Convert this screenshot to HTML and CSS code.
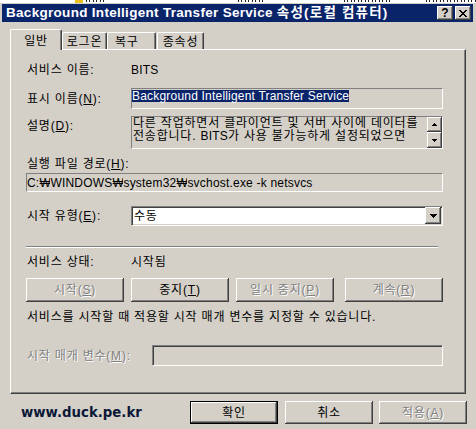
FILE: index.html
```html
<!DOCTYPE html>
<html lang="ko">
<head>
<meta charset="utf-8">
<title>BITS 속성</title>
<link rel="stylesheet" href="styles.css">
</head>
<body>
<div class="screen">
  <div class="behind">
    <span class="frag-icon"></span>
    <span class="frag f1"></span>
    <span class="frag f2"></span>
    <span class="frag f3"></span>
    <span class="frag f4"></span>
  </div>
  <div class="window">
    <div class="titlebar">
      <span class="title">Background Intelligent Transfer Service <span class="title-ko">속성(로컬 컴퓨터)</span></span>
      <div class="caps">
        <div class="cap help">?</div>
        <div class="cap close">
          <svg width="8" height="7" viewBox="0 0 8 7" shape-rendering="crispEdges">
            <rect x="0" y="0" width="2" height="1"/><rect x="6" y="0" width="2" height="1"/>
            <rect x="1" y="1" width="2" height="1"/><rect x="5" y="1" width="2" height="1"/>
            <rect x="2" y="2" width="4" height="1"/>
            <rect x="3" y="3" width="2" height="1"/>
            <rect x="2" y="4" width="4" height="1"/>
            <rect x="1" y="5" width="2" height="1"/><rect x="5" y="5" width="2" height="1"/>
            <rect x="0" y="6" width="2" height="1"/><rect x="6" y="6" width="2" height="1"/>
          </svg>
        </div>
      </div>
    </div>
    <div class="client">
      <div class="tabs">
        <div class="tab active">일반</div>
        <div class="tab t2">로그온</div>
        <div class="tab t3">복구</div>
        <div class="tab t4">종속성</div>
      </div>
      <div class="panel">
        <div class="row r-name">
          <span class="label">서비스 이름:</span>
          <span class="value latin">BITS</span>
        </div>
        <div class="row r-display">
          <span class="label">표시 이름(<u>N</u>):</span>
          <div class="field flat display"><span class="sel">Background Intelligent Transfer Service</span></div>
        </div>
        <div class="row r-desc">
          <span class="label">설명(<u>D</u>):</span>
          <div class="field flat desc">
            <div class="desc-text">다른 작업하면서 클라이언트 및 서버 사이에 데이터를<br>전송합니다. <span class="latin">BITS</span>가 사용 불가능하게 설정되었으면</div>
            <div class="vscroll">
              <div class="btn sbtn">
                <svg width="5" height="3" viewBox="0 0 5 3" shape-rendering="crispEdges"><rect x="2" y="0" width="1" height="1"/><rect x="1" y="1" width="3" height="1"/><rect x="0" y="2" width="5" height="1"/></svg>
              </div>
              <div class="btn sbtn down">
                <svg width="5" height="3" viewBox="0 0 5 3" shape-rendering="crispEdges"><rect x="0" y="0" width="5" height="1"/><rect x="1" y="1" width="3" height="1"/><rect x="2" y="2" width="1" height="1"/></svg>
              </div>
            </div>
          </div>
        </div>
        <div class="row r-pathlabel">
          <span class="label wide">실행 파일 경로(<u>H</u>):</span>
        </div>
        <div class="row r-path">
          <div class="field flat path">C:<span class="won">₩</span>WINDOWS<span class="won">₩</span>system32<span class="won">₩</span>svchost.exe -k netsvcs</div>
        </div>
        <div class="row r-start">
          <span class="label">시작 유형(<u>E</u>):</span>
          <div class="field sunken select">
            <span class="select-text">수동</span>
            <div class="btn ddbtn">
              <svg width="7" height="4" viewBox="0 0 7 4" shape-rendering="crispEdges"><rect x="0" y="0" width="7" height="1"/><rect x="1" y="1" width="5" height="1"/><rect x="2" y="2" width="3" height="1"/><rect x="3" y="3" width="1" height="1"/></svg>
            </div>
          </div>
        </div>
        <div class="sep"></div>
        <div class="row r-status">
          <span class="label">서비스 상태:</span>
          <span class="value">시작됨</span>
        </div>
        <div class="row r-buttons">
          <div class="btn act disabled">시작(<u>S</u>)</div>
          <div class="btn act">중지(<u>T</u>)</div>
          <div class="btn act disabled">일시 중지(<u>P</u>)</div>
          <div class="btn act disabled last">계속(<u>R</u>)</div>
        </div>
        <div class="row r-help">서비스를 시작할 때 적용할 시작 매개 변수를 지정할 수 있습니다.</div>
        <div class="row r-param">
          <span class="label param-label disabled">시작 매개 변수(<u>M</u>):</span>
          <div class="field sunken param"></div>
        </div>
      </div>
      <div class="footer">
        <span class="watermark">www.duck.pe.kr</span>
        <div class="dlg-btns">
          <div class="btn dlg default">확인</div>
          <div class="btn dlg cancel">취소</div>
          <div class="btn dlg disabled">적용(<u>A</u>)</div>
        </div>
      </div>
    </div>
  </div>
</div>
</body>
</html>
```
FILE: styles.css
```css
* { box-sizing: border-box; margin: 0; padding: 0; }
html, body { width: 476px; height: 429px; overflow: hidden; }
body {
  background: #fff;
  font-family: "Liberation Sans", "Noto Sans CJK KR", sans-serif;
  font-size: 12px;
  line-height: 14px;
  letter-spacing: 0.8px;
  color: #000;
}
u { text-decoration: underline; text-underline-offset: 1px; }
.latin { letter-spacing: 0.2px; }

.screen { width: 476px; height: 429px; display: flex; flex-direction: column; }

/* bottoms of glyphs from the window behind */
.behind { height: 3px; flex: none; display: flex; align-items: flex-start; overflow: hidden; background: #fff; }
.frag {
  height: 2px;
  flex: none;
  background: repeating-linear-gradient(90deg, #222 0 1px, transparent 1px 3px, #222 3px 4px, transparent 4px 7px);
}
.frag-icon { width: 8px; height: 3px; background: #e8c020; margin-left: 75px; flex: none; }
.f1 { margin-left: 3px; width: 20px; }
.f2 { margin-left: 132px; width: 26px; }
.f3 { margin-left: 80px; width: 46px; }
.f4 { margin-left: 36px; width: 66px; }

.window {
  flex: 1;
  display: flex;
  flex-direction: column;
  background: #d4d0c8;
  padding: 1px 3px 0 2px;
}

.titlebar {
  height: 18px;
  flex: none;
  background: #0a246a;
  display: flex;
  align-items: center;
  justify-content: space-between;
  padding: 0 2px 0 4px;
}
.title {
  color: #fff;
  font-weight: bold;
  font-size: 13.5px;
  letter-spacing: 0.3px;
  line-height: 18px;
  white-space: nowrap;
}
.title-ko { letter-spacing: 1.2px; }
.caps { display: flex; gap: 2px; }
.cap {
  width: 16px;
  height: 14px;
  background: #d4d0c8;
  box-shadow: inset -1px -1px #404040, inset 1px 1px #fff, inset -2px -2px #808080, inset 2px 2px #d4d0c8;
  display: flex;
  align-items: center;
  justify-content: center;
}
.help { font-weight: bold; font-size: 12px; line-height: 14px; letter-spacing: 0; }
.close svg { fill: #000; }

.client { flex: 1; display: flex; flex-direction: column; padding: 7px 0 0 8px; }

.tabs { display: flex; align-items: flex-end; height: 20px; flex: none; position: relative; z-index: 1; }
.tab {
  height: 17px;
  background: #d4d0c8;
  border-top: 1px solid #fff;
  border-left: 1px solid #fff;
  border-right: 1px solid #404040;
  box-shadow: inset -1px 0 #808080;
  border-radius: 2px 2px 0 0;
  padding-top: 2px;
  text-align: center;
  white-space: nowrap;
}
.tab.active { width: 52px; height: 21px; margin-bottom: -1px; padding-top: 4px; }
.t2 { width: 45px; }
.t3 { width: 49px; text-align: left; padding-left: 7px; }
.t4 { width: 47px; margin-left: 1px; }

.panel {
  width: 456px;
  height: 345px;
  flex: none;
  border-top: 1px solid #fff;
  border-left: 1px solid #fff;
  border-right: 1px solid #404040;
  border-bottom: 1px solid #404040;
  box-shadow: inset -1px -1px #808080;
  padding: 13px 22px 0 15px;
  display: flex;
  flex-direction: column;
}

.row { display: flex; align-items: center; flex: none; }
.label { width: 105px; padding-left: 1px; flex: none; white-space: nowrap; }
.label.wide { width: auto; }
.value { white-space: nowrap; }

.r-name { height: 14px; }
.r-display { height: 21px; margin-top: 11px; }
.r-desc { height: 33px; margin-top: 7px; align-items: flex-start; }
.r-desc .label { margin-top: 3px; }
.r-pathlabel { height: 14px; margin-top: 8px; }
.r-path { height: 19px; margin-top: 2px; }
.r-start { height: 20px; margin-top: 14px; }
.sep { height: 2px; margin-top: 20px; margin-right: 5px; border-top: 1px solid #808080; border-bottom: 1px solid #fff; flex: none; }
.r-status { height: 14px; margin-top: 7px; }
.r-buttons { height: 24px; margin-top: 9px; }
.r-help { height: 14px; margin-top: 8px; padding-left: 1px; white-space: nowrap; }
.r-param { height: 21px; margin-top: 21px; }

.field { flex: 1; align-self: stretch; min-width: 0; }
.flat {
  background: #d4d0c8;
  border-top: 1px solid #808080;
  border-left: 1px solid #808080;
  border-bottom: 1px solid #fff;
  border-right: 1px solid #fff;
}
.sunken {
  border-top: 1px solid #808080;
  border-left: 1px solid #808080;
  border-bottom: 1px solid #fff;
  border-right: 1px solid #fff;
  box-shadow: inset 1px 1px #404040, inset -1px -1px #d4d0c8;
}

.display { white-space: nowrap; overflow: hidden; }
.sel {
  display: inline-block;
  height: 12px;
  line-height: 12px;
  background: #0a246a;
  color: #fff;
  letter-spacing: 0.2px;
}

.desc { display: flex; }
.desc-text { flex: 1; line-height: 13px; white-space: nowrap; padding-left: 1px; }
.vscroll { width: 15px; flex: none; display: flex; flex-direction: column; }
.sbtn { height: 15px; }
.sbtn.down { height: 16px; }

.btn {
  background: #d4d0c8;
  box-shadow: inset -1px -1px #404040, inset 1px 1px #fff, inset -2px -2px #808080, inset 2px 2px #d4d0c8;
  display: flex;
  align-items: center;
  justify-content: center;
  white-space: nowrap;
}
.btn svg { fill: #000; }

.path {
  display: flex;
  align-items: center;
  white-space: nowrap;
  padding-left: 0;
  letter-spacing: 0.2px;
}
.won {
  display: inline-block;
  width: 11px;
  overflow: hidden;
  text-align: center;
  font-family: "Liberation Sans", "Noto Sans", sans-serif;
  font-size: 12px;
  letter-spacing: 0;
  flex: none;
}

.select { background: #fff; display: flex; align-items: center; padding: 1px 1px 1px 2px; }
.select-text { flex: 1; }
.ddbtn { width: 16px; height: 17px; align-self: flex-start; flex: none; margin-top: -1px; }

.act { width: 98px; height: 24px; flex: none; margin-right: 7px; }
.act.last { margin-left: 4px; margin-right: 0; }

.disabled { color: #808080; text-shadow: 1px 1px 0 #fff; }

.param-label { width: 126px; }
.param { background: #d4d0c8; }

.footer { height: 23px; margin-top: 7px; display: flex; align-items: center; flex: none; }
.watermark {
  margin-left: 11px;
  font-family: "DejaVu Sans", sans-serif;
  font-weight: bold;
  font-size: 13.3px;
  letter-spacing: 0;
  color: #0c1838;
  white-space: nowrap;
}
.dlg-btns { margin-left: auto; margin-right: 6px; display: flex; }
.dlg { width: 88px; height: 23px; }
.dlg.default {
  border: 1px solid #000;
  margin-right: 7px;
}
.dlg.cancel { margin-right: 6px; }
```
